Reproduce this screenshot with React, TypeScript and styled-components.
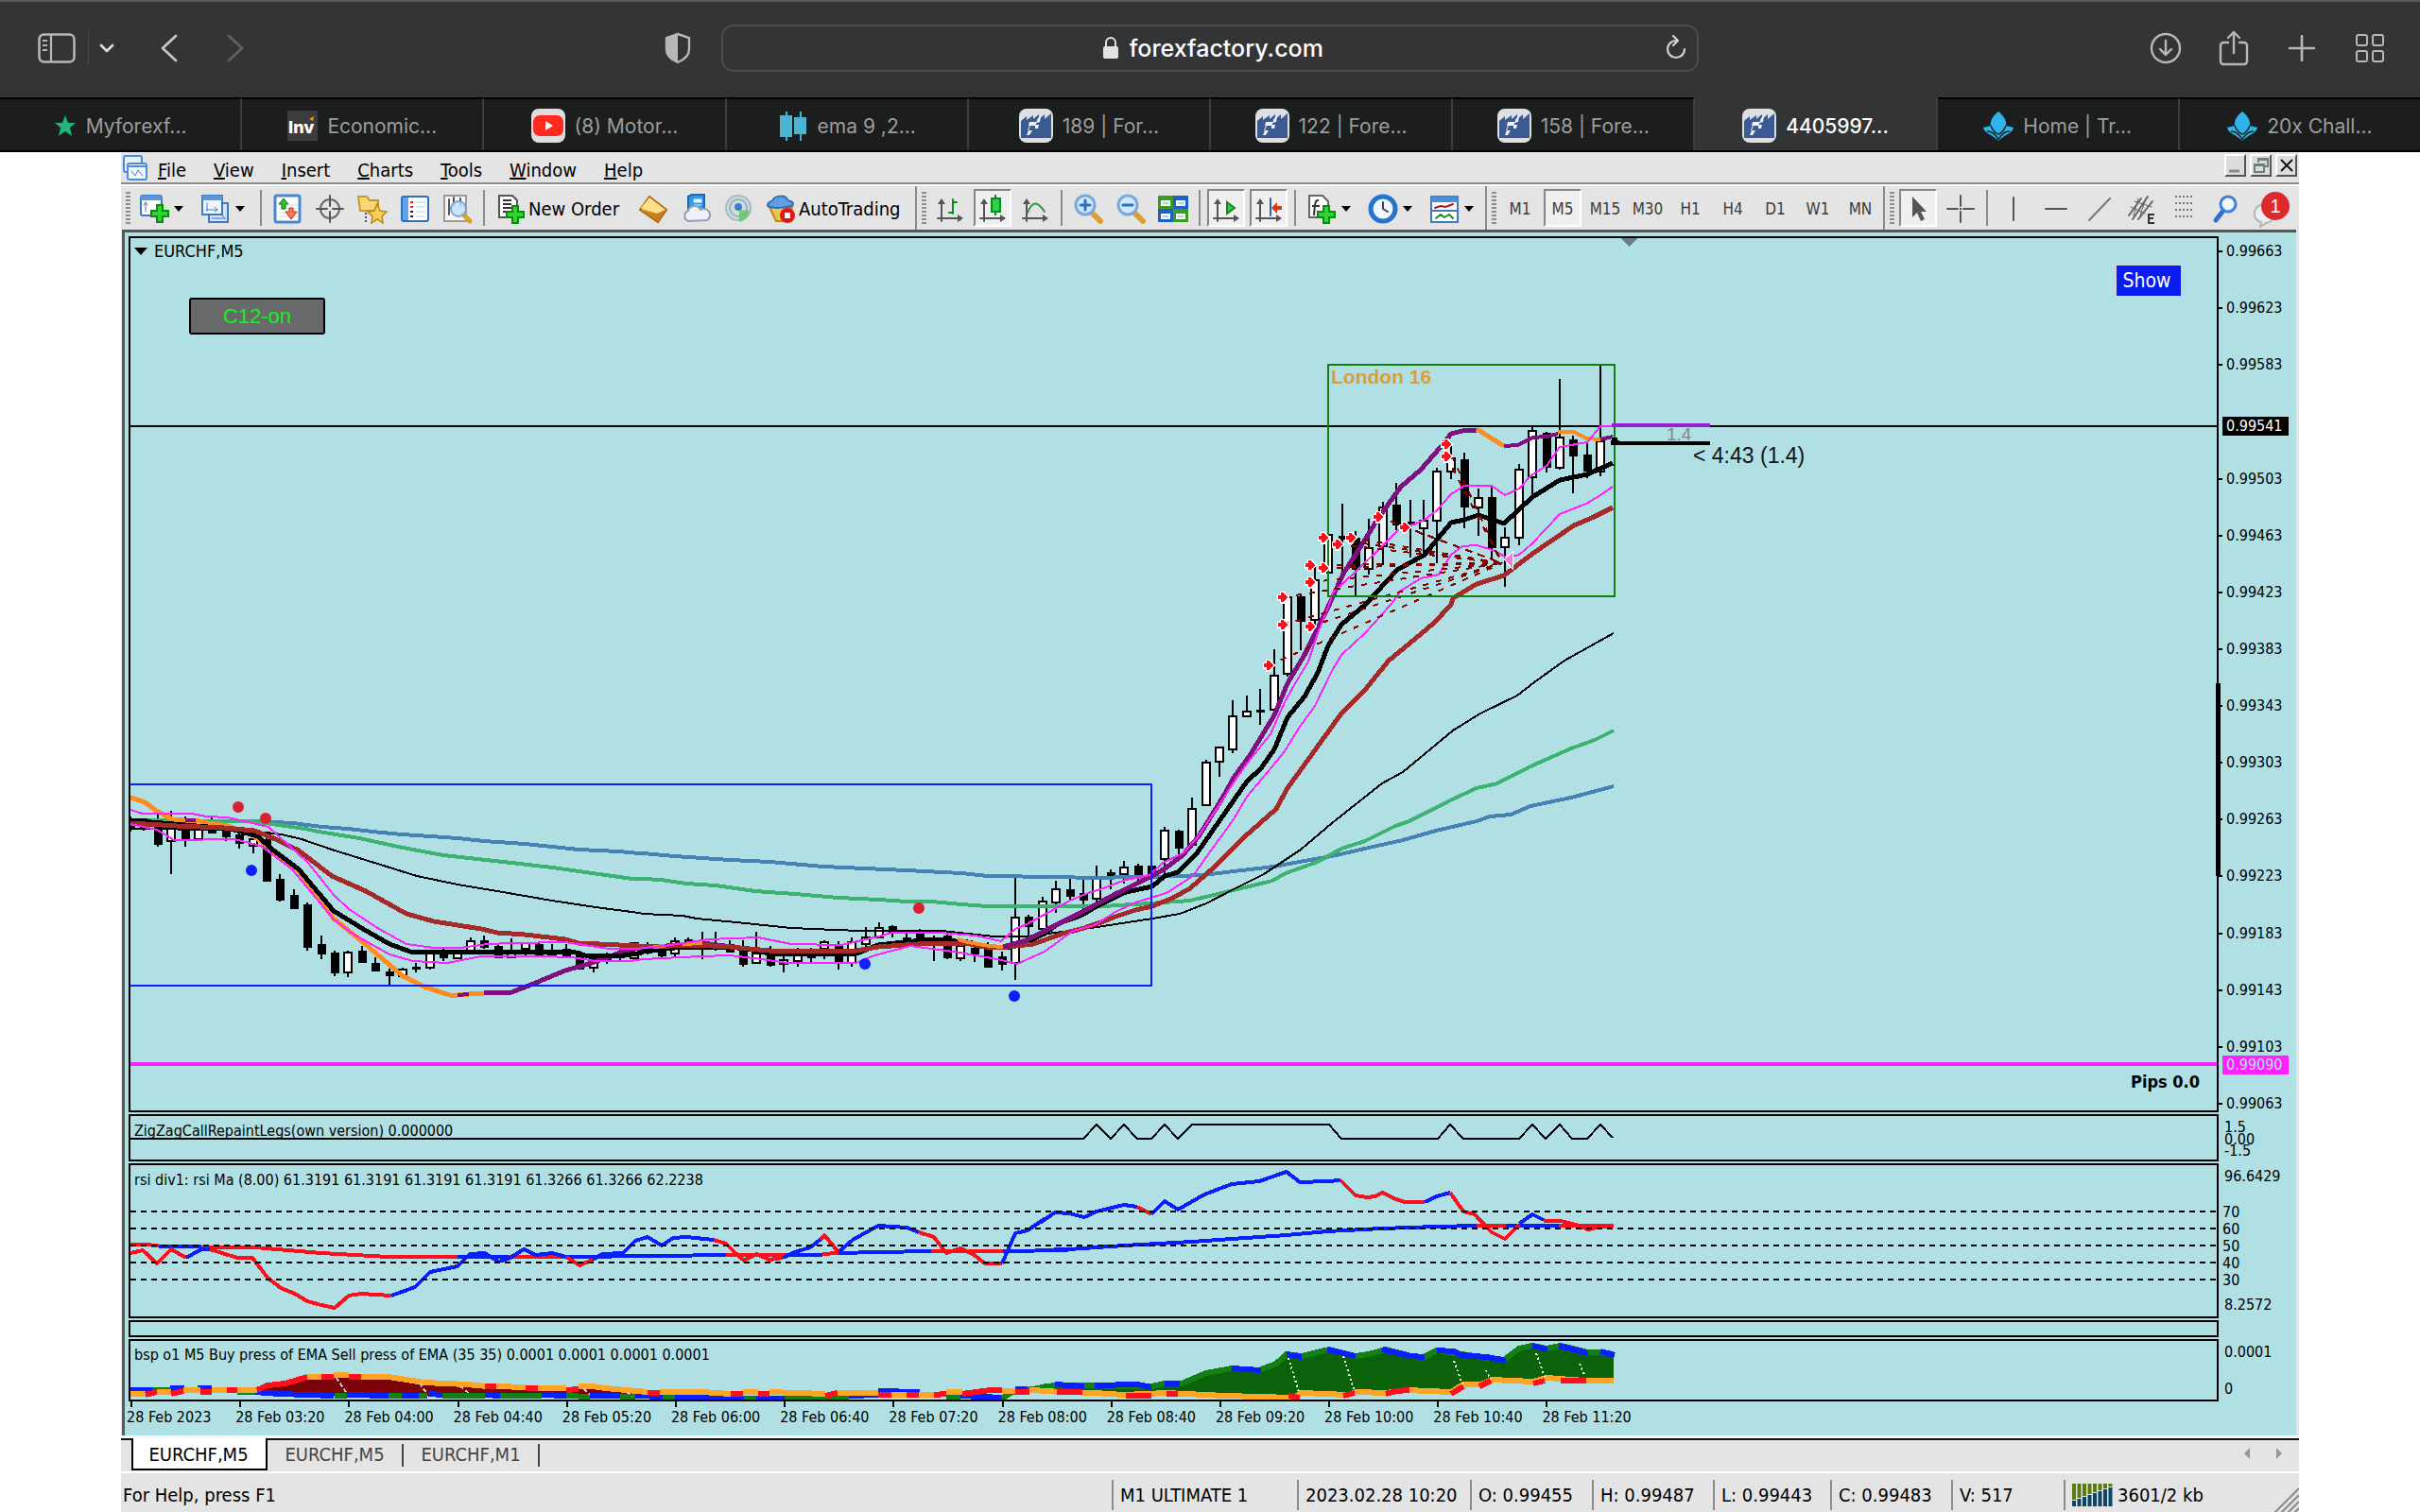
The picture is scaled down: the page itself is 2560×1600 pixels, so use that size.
import React from "react";
import styled, { createGlobalStyle } from "styled-components";

const UI = `"DejaVu Sans Condensed", "DejaVu Sans", sans-serif`;
const SYS = `Inter, "Liberation Sans", sans-serif`;

const Global = createGlobalStyle`
  html, body { margin: 0; background: #ffffff; }
  * { box-sizing: border-box; }
  button, input { font: inherit; color: inherit; }
`;

/* ---------- browser chrome ---------- */

const Page = styled.div`
  min-height: 100vh;
  display: flex;
  flex-direction: column;
  font-family: ${UI};
  font-size: 20px;
  color: #000;
`;

const BrowserBar = styled.header`
  display: grid;
  grid-template-columns: 1fr minmax(300px, 1034px) 1fr;
  align-items: center;
  height: 103px;
  padding-bottom: 3px;
  border-top: 2px solid #56585a;
  background: #333436;
  font-family: ${SYS};
`;

const BarSide = styled.div<{ $end?: boolean }>`
  display: flex;
  align-items: center;
  justify-content: ${(p) => (p.$end ? "flex-end" : "flex-start")};
  gap: ${(p) => (p.$end ? "28px" : "0")};
  padding: ${(p) => (p.$end ? "0 31px" : "0 24px 0 27px")};
`;

const GhostButton = styled.button<{ $w?: number; $push?: boolean }>`
  display: flex;
  align-items: center;
  justify-content: center;
  width: ${(p) => p.$w || 44}px;
  height: 44px;
  padding: 0;
  margin-left: ${(p) => (p.$push ? "auto" : "0")};
  border: 0;
  background: none;
  color: #b6b7b9;
`;

const BarRule = styled.span`
  width: 1px;
  height: 36px;
  margin-right: 5px;
  background: #48494b;
`;

const AddressBox = styled.div`
  display: flex;
  align-items: center;
  height: 50px;
  padding: 0 8px;
  border: 2px solid #4a4c4e;
  border-radius: 13px;
  color: #ffffff;
`;

const Address = styled.label`
  flex: 1;
  display: flex;
  align-items: center;
  justify-content: center;
  gap: 11px;
  padding-left: 36px;
`;

const AddressInput = styled.input`
  width: 208px;
  height: 36px;
  padding: 0;
  border: 0;
  background: none;
  font-size: 25px;
  font-weight: 500;
  color: #ffffff;
  outline: none;
`;

const TabStrip = styled.nav`
  display: flex;
  height: 58px;
  border-bottom: 2px solid #000;
  background: #1c1e1d;
  font-family: ${SYS};
`;

const BrowserTab = styled.button<{ $active?: boolean }>`
  flex: 1 1 0;
  min-width: 0;
  display: flex;
  align-items: center;
  justify-content: center;
  gap: 10px;
  padding: 2px 0 0;
  border: 0;
  border-right: 2px solid #3b3d3e;
  border-top: 2px solid ${(p) => (p.$active ? "#333436" : "#000")};
  background: ${(p) => (p.$active ? "#333436" : "#1c1e1d")};
  color: ${(p) => (p.$active ? "#ffffff" : "#9b9d9d")};
  font-size: 21px;
  font-weight: ${(p) => (p.$active ? 500 : 400)};
  white-space: nowrap;
  &:last-child { border-right: 0; }
`;

/* ---------- terminal window ---------- */

const Terminal = styled.main`
  flex: 1;
  display: flex;
  flex-direction: column;
  margin: 0 5%;
  background: #e4e4e4;
`;

const MenuBar = styled.div`
  display: flex;
  align-items: center;
  height: 36px;
  padding: 0 2px;
  border-bottom: 2px solid #fff;
  box-shadow: inset 0 -2px 0 #8a8a8a;
`;

const Menus = styled.div`
  display: flex;
  gap: 29px;
  margin-left: 11px;
  padding-top: 3px;
`;

const MenuItem = styled.button`
  height: 30px;
  padding: 0;
  border: 0;
  background: none;
`;

const WindowButtons = styled.div`
  display: flex;
  gap: 4px;
  margin: -6px 0 0 auto;
`;

const WindowButton = styled.button`
  display: flex;
  align-items: center;
  justify-content: center;
  width: 23px;
  height: 24px;
  padding: 0;
  border: 2px solid;
  border-color: #ffffff #555555 #555555 #ffffff;
  background: #dcdcdc;
`;

const ToolBar = styled.div`
  display: flex;
  height: 46px;
`;

const Group = styled.div<{ $w: number; $first?: boolean }>`
  display: flex;
  align-items: center;
  gap: 5px;
  flex: 0 1 ${(p) => p.$w}px;
  min-width: 0;
  padding-left: 5px;
  border-left: ${(p) => (p.$first ? "0" : "2px solid #8a8a8a")};
`;

const Grip = styled.span`
  width: 5px;
  height: 34px;
  flex: none;
  background: repeating-linear-gradient(#8c8c8c 0 2px, #e4e4e4 2px 4px);
`;

const Sep = styled.span`
  width: 2px;
  height: 38px;
  margin: 0 2px;
  flex: none;
  background: #8a8a8a;
`;

const Tool = styled.button<{ $on?: boolean; $w?: number }>`
  display: flex;
  align-items: center;
  flex: none;
  width: ${(p) => p.$w || 40}px;
  height: 40px;
  padding: 2px 0 0;
  border: 2px solid;
  border-color: ${(p) => (p.$on ? "#858585 #ffffff #ffffff #858585" : "transparent")};
  background: ${(p) => (p.$on ? "#efefef" : "transparent")};
  white-space: nowrap;
`;

const IconBox = styled.span`
  display: flex;
  align-items: center;
  justify-content: center;
  flex: none;
  width: 36px;
  height: 34px;
`;

const Caret = styled.span`
  margin-left: 3px;
  border: 5px solid transparent;
  border-top: 6px solid #000;
  border-bottom: 0;
`;

const ToolLabel = styled.span`
  margin-left: 1px;
`;

const Frame = styled.span`
  flex: 1;
  text-align: center;
  font-size: 17px;
  color: #3c3c3c;
`;

/* ---------- chart ---------- */

const ChartArea = styled.section`
  flex: none;
  margin-left: 1px;
  margin-right: 3px;
  padding: 4px 0 0 4px;
  border-top: 3px solid #555;
  border-left: 3px solid #5a5a5a;
  background: #b0e0e3;
  font-size: 16px;
`;

const Panel = styled.div`
  display: flex;
  margin-bottom: 2px;
`;

const Plot = styled.div<{ $h?: number }>`
  position: relative;
  flex: 1;
  min-width: 0;
  height: ${(p) => (p.$h ? p.$h + "px" : "auto")};
  border: 2px solid #000;
`;

const PlotSvg = styled.svg`
  display: block;
  width: 100%;
  height: auto;
`;

const Axis = styled.div`
  position: relative;
  flex: 0 0 82px;
`;

const RangeBar = styled.span`
  position: absolute;
  left: -3px;
  top: 51%;
  width: 5px;
  height: 22%;
  background: #000;
`;

const Mark = styled.span<{ $tick?: boolean; $near?: boolean }>`
  position: absolute;
  left: ${(p) => (p.$near ? "4px" : "6px")};
  line-height: 20px;
  margin-top: -9px;
  padding-left: ${(p) => (p.$tick ? "2px" : "0")};
  &::before {
    content: "";
    position: absolute;
    display: ${(p) => (p.$tick ? "block" : "none")};
    left: -6px;
    top: 9px;
    width: 4px;
    height: 2px;
    background: #000;
  }
`;

const PriceTag = styled.span<{ $pink?: boolean }>`
  position: absolute;
  left: 4px;
  width: 70px;
  margin-top: -9px;
  padding-left: 4px;
  line-height: 20px;
  background: ${(p) => (p.$pink ? "#ff22ff" : "#000")};
  color: ${(p) => (p.$pink ? "#b0e0e3" : "#fff")};
`;

const Caption = styled.div<{ $top: number; $large?: boolean }>`
  position: absolute;
  top: ${(p) => p.$top}px;
  left: 4px;
  display: flex;
  align-items: center;
  gap: 7px;
  line-height: 20px;
  font-size: ${(p) => (p.$large ? 18 : 16)}px;
  white-space: nowrap;
`;

const CaptionArrow = styled.span`
  border: 7px solid transparent;
  border-top: 8px solid #000;
  border-bottom: 0;
`;

const Overlay = styled.div`
  position: absolute;
  inset: 0;
`;

const ToggleButton = styled.button`
  position: absolute;
  left: 62px;
  top: 63px;
  width: 144px;
  height: 39px;
  border: 2px solid #000;
  border-radius: 3px;
  background: #68696b;
  color: #17f01f;
  font-family: "Liberation Sans", sans-serif;
  font-size: 22px;
  line-height: 32px;
`;

const ShowButton = styled.button`
  position: absolute;
  right: 37px;
  top: 28px;
  width: 70px;
  height: 34px;
  padding: 0 4px 0 0;
  border: 1px solid #d6d2dc;
  background: #0a1df0;
  color: #fff;
  font-size: 21px;
`;

const Pips = styled.span`
  position: absolute;
  right: 18px;
  bottom: 20px;
  font-size: 18px;
  font-weight: 700;
`;

const TimeAxis = styled.div`
  display: flex;
  height: 36px;
  margin-top: -2px;
  margin-left: -2px;
  margin-right: 84px;
`;

const TimeMark = styled.span`
  position: relative;
  flex: 0 0 5.21%;
  padding-top: 7px;
  white-space: nowrap;
  line-height: 20px;
  &::before {
    content: "";
    position: absolute;
    left: 4px;
    top: 0;
    width: 2px;
    height: 6px;
    background: #000;
  }
`;

/* ---------- bottom bars ---------- */

const ChartTabs = styled.div`
  display: flex;
  align-items: flex-start;
  height: 40px;
  border-top: 3px solid #f6f6f6;
  border-bottom: 2px solid #ffffff;
  box-shadow: inset 0 2px 0 #111;
  padding-left: 11px;
`;

const ChartTab = styled.button<{ $active?: boolean }>`
  width: 144px;
  height: ${(p) => (p.$active ? "34px" : "32px")};
  padding: 2px 2px 0 0;
  border: 0;
  color: #444;
  background: linear-gradient(#444, #444) right 6px / 2px 24px no-repeat;
  ${(p) =>
    p.$active &&
    `background: #fff; color: #000; border: 2px solid #000; border-top: 0;`}
`;

const ScrollArrows = styled.div`
  display: flex;
  gap: 14px;
  margin: 8px 11px 0 auto;
`;

const ScrollArrow = styled.button`
  width: 20px;
  height: 18px;
  padding: 0;
  border: 0;
  background: none;
  display: flex;
  align-items: center;
  justify-content: center;
`;

const StatusBar = styled.footer`
  flex: 1;
  display: flex;
  align-items: center;
  min-height: 41px;
  padding-top: 5px;
`;

const StatusCell = styled.span<{ $w?: number }>`
  display: flex;
  align-items: center;
  gap: 4px;
  flex: ${(p) => (p.$w ? `0 1 ${p.$w}px` : "1 1 0")};
  height: 32px;
  padding-left: ${(p) => (p.$w ? "7px" : "2px")};
  border-left: ${(p) => (p.$w ? "2px solid #8a8a8a" : "0")};
  white-space: nowrap;
`;

const Corner = styled.svg`
  margin: 10px 0 0 auto;
`;

/* ---------- icons ---------- */

const line = (d: string, c = "currentColor", w = 2) => (
  <path d={d} fill="none" stroke={c} strokeWidth={w} strokeLinecap="round" strokeLinejoin="round" />
);

const Plus = ({ x, y }: { x: number; y: number }) => (
  <path
    transform={`translate(${x} ${y})`}
    d="M6 0h6v6h6v6h-6v6H6v-6H0V6h6z"
    fill="#2fd52f"
    stroke="#0b8a12"
    strokeWidth="2"
  />
);

const Icon = ({ children, s = 32 }: { children: React.ReactNode; s?: number }) => (
  <svg width={s} height={s} viewBox="0 0 32 32" aria-hidden="true">
    {children}
  </svg>
);

const axes = (
  <>
    {line("M7 29V7", "#555", 2)}
    <path d="M3 11l4-6 4 6zM24 22l6 4-6 4z" fill="#555" />
    {line("M3 26H27", "#555", 2)}
  </>
);

const icons: Record<string, React.ReactNode> = {
  newchart: (
    <>
      <rect x="2" y="2" width="22" height="21" rx="2" fill="#fff" stroke="#3f7ac0" strokeWidth="2" />
      <rect x="2" y="2" width="22" height="5" fill="#5c96dc" />
      {line("M7 9v10M5 12l2-3 2 3", "#5577aa", 1)}
      <Plus x={13} y={12} />
    </>
  ),
  profiles: (
    <>
      <rect x="9" y="10" width="20" height="20" fill="#cfe3fb" stroke="#3f7ac0" strokeWidth="2" />
      <rect x="2" y="2" width="21" height="20" fill="#eef5ff" stroke="#3f7ac0" strokeWidth="2" />
      <rect x="2" y="2" width="21" height="5" fill="#5c96dc" />
      {line("M7 10v8M6 17h12M15 14l3 3-3 2M12 26h14M23 23l3 3", "#5577aa", 1)}
    </>
  ),
  market: (
    <>
      <rect x="3" y="2" width="26" height="28" rx="2" fill="#fff" stroke="#4a86d0" strokeWidth="3" />
      <path d="M7 16h20M7 20h20M7 24h20M7 12h20" stroke="#ccd8ea" />
      <path d="M12 5l5 6h-3v5h-4v-5H7z" fill="#2cc42c" stroke="#0b7a12" />
      <path d="M18 15h4v4h4l-6 8-6-8h4z" fill="#ff7a5a" stroke="#c02a10" />
    </>
  ),
  target: (
    <>
      <circle cx="16" cy="16" r="10" fill="none" stroke="#6a6a6a" strokeWidth="2" />
      {line("M16 2v11M16 19v11M2 16h11M19 16h11", "#555")}
    </>
  ),
  folder: (
    <>
      <path d="M1 3h9l3 4h9v11H3z" fill="#f8d774" stroke="#c59a2a" strokeWidth="2" />
      <path d="M21 11l3 7 7 1-5 5 1 7-6-4-6 4 1-7-5-5 7-1z" fill="#f9cf58" stroke="#b98718" strokeWidth="1.5" />
      <path d="M9 20v10" stroke="#555" strokeWidth="2" strokeDasharray="2 2" />
    </>
  ),
  navigator: (
    <>
      <rect x="2" y="3" width="28" height="26" rx="2" fill="#fff" stroke="#2f6fbe" strokeWidth="2" />
      <rect x="3" y="4" width="6" height="24" fill="#5fa4ea" />
      <path d="M11 9h3M11 14h3" stroke="#e02020" strokeWidth="2" />
      <path d="M11 19h3M11 24h3" stroke="#222" strokeWidth="2" />
      <path d="M17 9h10M17 14h10M17 19h10M17 24h10" stroke="#b7d0ee" />
    </>
  ),
  tester: (
    <>
      <rect x="2" y="2" width="23" height="27" fill="#f7f7f7" stroke="#9a9a9a" strokeWidth="2" />
      {line("M7 6v16M12 4v8M19 5v8", "#555", 2)}
      {line("M22 22l7 7", "#d8a030", 5)}
      <circle cx="17" cy="16" r="8" fill="#bfe0fb" fillOpacity=".85" stroke="#7aa6cf" strokeWidth="2" />
    </>
  ),
  order: (
    <>
      <path d="M4 2h14l5 5v18H4z" fill="#fff" stroke="#555" strokeWidth="2" />
      <path d="M8 7h9M8 11h9M8 15h9M8 19h6" stroke="#333" strokeWidth="2" />
      <Plus x={12} y={13} />
    </>
  ),
  gold: (
    <>
      <path d="M12 3l18 14-9 13L2 17z" fill="#f0b840" stroke="#a8690f" strokeWidth="2" />
      <path d="M12 4l17 13-9 4L3 15z" fill="#ffe08a" />
      <path d="M20 21l9-4-8 12-17-12z" fill="#c8811a" />
    </>
  ),
  cloud: (
    <>
      <path d="M8 3l4-2h13v16H8z" fill="#2f9af0" stroke="#1268c0" strokeWidth="2" />
      <path d="M14 6h8v3h-8zM14 12h8" fill="#e8f4ff" stroke="#e8f4ff" />
      <path d="M8 29a6 6 0 010-11 7 7 0 0113-1 6 6 0 017 11z" fill="#eef2f8" stroke="#8f9fb8" strokeWidth="2" />
    </>
  ),
  radio: (
    <>
      <circle cx="16" cy="15" r="13" fill="#d2dcdc" stroke="#a4bcba" strokeWidth="2" />
      <circle cx="16" cy="15" r="9" fill="none" stroke="#8cb4cc" strokeWidth="2" />
      <circle cx="16" cy="14" r="4" fill="#3a7fd0" />
      <path d="M17 17v13c6-2 10-6 11-12z" fill="#5cc45c" fillOpacity=".75" />
    </>
  ),
  auto: (
    <>
      <path d="M4 14h24l-7 15H11z" fill="#f4c24c" stroke="#b98718" strokeWidth="2" />
      <path d="M2 12c0-4 5-3 6-6s12-6 15 0c1 3 6 1 6 5s-27 6-27 1z" fill="#5f9fe0" stroke="#2f6fb8" strokeWidth="2" />
      <circle cx="23" cy="23" r="8" fill="#e01818" />
      <rect x="20" y="20" width="6" height="6" fill="#fff" />
    </>
  ),
  bars: (
    <>
      {axes}
      {line("M19 6v15M19 9h4M15 20h4", "#0f8a1a", 2)}
    </>
  ),
  candles: (
    <>
      {axes}
      <path d="M19 1v22" stroke="#0f8a1a" strokeWidth="2" />
      <rect x="15" y="5" width="9" height="14" fill="#2fd04a" stroke="#0f8a1a" strokeWidth="2" />
    </>
  ),
  linechart: (
    <>
      {axes}
      {line("M8 20C13 8 18 7 26 19", "#2a9a3a", 2)}
    </>
  ),
  zoomin: (
    <>
      {line("M21 21l8 8", "#d8a030", 6)}
      <circle cx="13" cy="12" r="10" fill="#cfe8fc" stroke="#7aa8dc" strokeWidth="3" />
      {line("M8 12h10M13 7v10", "#2f6fbe", 3)}
    </>
  ),
  zoomout: (
    <>
      {line("M21 21l8 8", "#d8a030", 6)}
      <circle cx="13" cy="12" r="10" fill="#cfe8fc" stroke="#7aa8dc" strokeWidth="3" />
      {line("M8 12h10", "#2f6fbe", 3)}
    </>
  ),
  tile: (
    <>
      <path d="M0 2h16v14H0zM16 16h16v14H16z" fill="#3f9a1f" />
      <path d="M16 2h16v14H16zM0 16h16v14H0z" fill="#1f5fc8" />
      <path d="M3 7h10v6H3zM19 7h10v6H19zM3 21h10v6H3zM19 21h10v6H19z" fill="#f2faff" />
      <path d="M5 10h6M21 10h6M5 24h6M21 24h6" stroke="#7aa" strokeWidth="1" />
    </>
  ),
  scroll: (
    <>
      {axes}
      <path d="M17 9l8 6-8 6z" fill="#2fd04a" stroke="#0f8a1a" strokeWidth="2" />
    </>
  ),
  shift: (
    <>
      {axes}
      {line("M18 5v18", "#2860c0", 2)}
      <path d="M19 15l6-6v4h5v4h-5v4z" fill="#d83a10" />
    </>
  ),
  indicator: (
    <>
      <path d="M3 2h14l6 6v17H3z" fill="#fff" stroke="#666" strokeWidth="2" />
      <path d="M13 7c-4-1-4 4-5 16M6 13h8" stroke="#333" strokeWidth="2" fill="none" />
      <Plus x={12} y={13} />
    </>
  ),
  clock: (
    <>
      <circle cx="16" cy="16" r="13" fill="#eef6ff" stroke="#2474cc" strokeWidth="5" />
      {line("M16 9v7l5 3", "#444", 2)}
    </>
  ),
  template: (
    <>
      <rect x="2" y="3" width="28" height="27" fill="#fff" stroke="#3f7ac0" strokeWidth="2" />
      <rect x="2" y="3" width="28" height="6" fill="#4d8fdc" />
      <path d="M2 18h28" stroke="#3f7ac0" strokeWidth="2" />
      {line("M6 15l6-2 5 1 8-3", "#b01818", 2)}
      {line("M7 26l5-4 4 3 5-3 4 4", "#1a8a2a", 2)}
    </>
  ),
  pointer: <path d="M10 3v22l5-5 4 9 4-2-4-8h6z" fill="#555" />,
  cross: (
    <>
      {line("M16 2v11M16 19v11M2 16h11M19 16h11", "#555")}
      <path d="M15 15h2v2h-2z" fill="#555" />
    </>
  ),
  vline: line("M16 4v24", "#555"),
  hline: line("M5 16h22", "#555"),
  trend: line("M6 28L28 5", "#777"),
  channel: (
    <>
      {line("M3 23L16 5M7 27L23 3M13 27L28 8", "#666", 2)}
      {line("M5 14l15 7M9 8l18 6M13 5l-5 18M21 5l-6 18", "#666", 1)}
      <path d="M30 22h-6v9h6M24 26h5" fill="none" stroke="#333" strokeWidth="2" />
    </>
  ),
  dots: (
    <path d="M7 3h18M7 10h18M7 17h18M7 24h18" stroke="#777" strokeWidth="2" strokeDasharray="2 2" />
  ),
  find: (
    <>
      {line("M12 19L5 28", "#2f6fd0", 5)}
      <circle cx="18" cy="11" r="8" fill="#eef6ff" stroke="#3f7fd8" strokeWidth="3" />
    </>
  ),
};

const BadgeSvg = styled.svg`
  flex: none;
`;

const Badge = () => (
  <BadgeSvg width="44" height="40" viewBox="0 0 44 40" aria-hidden="true">
    <path d="M3 27a11 10 0 1112 8l-6 4 1-5a10 9 0 01-7-7z" fill="#eee" stroke="#b5b5b5" strokeWidth="2" />
    <circle cx="25" cy="17" r="15" fill="#dc2a2c" />
    <text x="25" y="24" textAnchor="middle" fontSize="20" fill="#fff" fontFamily="Liberation Sans, sans-serif">
      1
    </text>
  </BadgeSvg>
);

const FactoryIcon = () => (
  <svg width="36" height="36" viewBox="0 0 36 36" aria-hidden="true">
    <rect width="36" height="36" rx="8" fill="#dedfe3" />
    <path d="M2 31V13l6-5v4l7-5v4l6-5v5l6-5v5l7-6v26z" fill="#3a5b92" />
    <path d="M11 14h8l-2 4h-6l-2 5h5l-3 5H8l2-5 2-5h-2zM20 10l3-2-1 6-4 1zM17 17h4l-1 4h-3z" fill="#eef1f7" />
  </svg>
);

const DropIcon = () => (
  <svg width="32" height="32" viewBox="0 0 32 32" aria-hidden="true">
    <path d="M16 1c5 4 9 9 8 15l8 2c-1 6-9 7-16 14C9 25 1 24 0 18l8-2C7 10 11 5 16 1z" fill="#2fb4ea" />
    <path d="M8 16c2 5 5 8 8 9 3-1 6-4 8-9M4 22c6 0 9 3 12 9M28 22c-6 0-9 3-12 9" stroke="#1c1e1d" strokeWidth="1.5" fill="none" />
  </svg>
);

const tabIcons: Record<string, React.ReactNode> = {
  star: (
    <svg width="24" height="24" viewBox="0 0 24 24" aria-hidden="true">
      <path d="M12 1l3 8h8l-6 5 2 9-7-5-7 5 2-9-6-5h8z" fill="#20b57c" />
    </svg>
  ),
  inv: (
    <svg width="32" height="32" viewBox="0 0 32 32" aria-hidden="true">
      <rect width="32" height="32" fill="#3c3c3c" />
      <text x="1" y="24" fontSize="18" fontWeight="800" fill="#fff" fontFamily="Inter, sans-serif">
        Inv
      </text>
      <path d="M23 9l5-3-1 5z" fill="#f79a1c" />
    </svg>
  ),
  tube: (
    <svg width="36" height="36" viewBox="0 0 36 36" aria-hidden="true">
      <rect width="36" height="36" rx="8" fill="#dedede" />
      <rect x="2" y="7" width="32" height="22" rx="7" fill="#ff2a20" />
      <path d="M15 13l8 5-8 5z" fill="#fff" />
    </svg>
  ),
  candle: (
    <svg width="32" height="32" viewBox="0 0 32 32" aria-hidden="true">
      <path d="M2 5h13v23H2zM17 7h13v18H17z" fill="#4db3d0" />
      <path d="M9 1v31M24 1v31" stroke="#4db3d0" strokeWidth="2" />
    </svg>
  ),
  factory: <FactoryIcon />,
  drop: <DropIcon />,
};

/* ---------- chart data ---------- */

/* A tile is a part of the plot whose readings are stored on their own grid:
   1568 steps across the tile's width and 3 steps to a unit downwards. */
type Tile = { x: number; y: number; w: number };
const A: Tile = { x: 130, y: 800, w: 560 };
const B: Tile = { x: 680, y: 800, w: 600 };
const C: Tile = { x: 1180, y: 640, w: 560 };
const D: Tile = { x: 1280, y: 360, w: 660 };
const E: Tile = { x: 1100, y: 1160, w: 700 };
const F: Tile = { x: 130, y: 1160, w: 1000 };

const at = (t: Tile, x: number, y: number): [number, number] => [
  Math.round(t.x + (x * t.w) / 1568),
  Math.round(t.y + y / 3),
];

const pts = (...parts: [Tile, string][]) =>
  parts
    .flatMap(([t, s]) => s.split(" ").map((p) => p.split(",").map(Number)).map(([x, y]) => at(t, x, y).join(",")))
    .join(" ");

const Line = ({ c, w, p }: { c: string; w: number; p: [Tile, string][] }) => (
  <polyline points={pts(...p)} fill="none" stroke={c} strokeWidth={w} strokeLinejoin="round" />
);

const BAR0 = 138;
const STEP = 14.4;

/* high, body top, body bottom, low; "w" marks a rising bar */
const candleRows: [number, number, string][] = [
  [0, 800,
    "192 200 230 240 b|205 225 232 238 b|185 225 278 288 b|175 232 270 375 w|192 228 268 288 b|215 232 265 270 w|195 230 243 245 b|212 230 256 270 b|240 250 276 293 b|245 264 286 308 w|262 264 395 395 b|375 391 456 462 b|424 441 482 482 b|466 472 606 617 b|570 597 627 644 b|618 624 687 698 b|618 624 687 703 w|602 618 655 655 b|640 656 682 682 b|676 683 697 725 b|672 679 700 705 w|656 668 675 686 b|618 627 671 677 w|612 622 639 650 b|618 625 642 642 w|576 587 617 620 w|570 586 606 612 b|596 602 638 640 b|580 620 640 642 w|590 595 612 635 w|590 597 635 637 b|598 618 632 635 w|597 612 634 636 b|618 624 675 678 b|640 645 673 686 w|625 632 650 660 b|615 622 640 650 b|592 595 642 642 w|592 597 625 630 b|605 612 632 638 b|576 587 627 640 w|576 581 605 610 b|558 592 606 645 b|558 600 606 618 b|585 598 620 625 b|585 608 660 670 b|558 628 658 660 w|602 612 664 670 b|630 647 659 686 w|608 622 652 670 w|610 622 640 657 b|586 592 612 645 w|587 598 655 677 b|576 592 658 670 w|543 577 598 608 w|527 545 576 580 w|537 539 558 575 b|562 575 590 600 b|549 560 588 595 b|570 585 600 650 b|560 570 638 644 b|595 602 643 650 w|600 608 627 655 b|590 612 670 670 b|622 635 659 682 b|385 512 658 710 w|505 510 540 570 b|446 463 550 556 w|397 424 465 498 w|390 424 443 455 b|390 435 455 488 b|348 390 454 465 w|360 370 382 422 b|333 355 374 405 w|343 349 374 400 b|345 349 380 380 b|226 237 328 380 w|235 236 292 315 b|133 167 283 290 w|13 21 156 158 w"],
  [80, 640, "450 452 497 545 w|304 355 458 470 w|288 339 355 357 w|266 332 340 380 b|142 226 334 340 w"],
  [85, 360,
    "815 817 1060 1068 w|808 812 890 985 b|720 763 888 955 w|615 619 737 740 w|518 622 630 735 b|605 626 726 810 b|567 660 727 745 w|513 530 653 713 w|453 523 586 603 b|507 577 585 690 b|507 572 598 685 w|405 418 574 707 w|330 375 418 440 w|357 378 527 598 b|470 500 531 620 w|465 497 656 700 b|595 628 656 783 w|394 412 628 650 w|273 289 435 498 w|290 293 403 420 b|124 310 406 410 w|302 314 365 486 b|320 363 413 437 b|78 320 418 431 w|310 318 330 333 b"],
];

const candles = candleRows.flatMap(([first, y0, rows]) =>
  rows.split("|").map((r, k) => {
    const f = r.split(" ");
    const [hi, top, bot, lo] = f.slice(0, 4).map((n) => Math.round(y0 + Number(n) / 3));
    return { x: Math.round(BAR0 + (first + k) * STEP), hi, top, bot, lo, up: f[4] === "w" };
  })
);

const arrows: [number, number][] = [
  [148, 1032], [182, 817], [182, 903], [252, 713], [252, 768], [252, 908], [286, 628],
  [286, 724], [320, 648], [354, 627], [424, 562], [490, 595], [593, 329], [593, 368],
];

const ORANGE = "#ff8c1e";
const PURPLE = "#7f107f";
const MAGENTA = "#ff22ff";
const BLUE = "#0a1eff";
const RED = "#ff0f1e";

const PriceDrawing = () => (
  <PlotSvg viewBox="138 252 2207 923" shapeRendering="crispEdges" role="img" aria-label="EURCHF price chart">
    <path d="M138 451H2345" stroke="#000" strokeWidth="2" />
    <path d="M138 1126H2345" stroke={MAGENTA} strokeWidth="4" />
    <path d="M1714 252h18l-9 9z" fill="#6d7f86" />
    {candles.map((c, i) => (
      <g key={i}>
        <path d={`M${c.x} ${c.hi}V${c.lo}`} stroke="#000" strokeWidth="2" />
        <rect
          x={c.x - 4}
          y={c.top}
          width="8"
          height={Math.max(2, c.bot - c.top)}
          fill={c.up ? "#fff" : "#000"}
          stroke="#000"
          strokeWidth={c.up ? 2 : 1}
        />
      </g>
    ))}
    <Line c="#4682b4" w={4} p={[
      [A, "385,207 505,213 545,218 590,226 665,230 740,241 825,248 870,252 990,262 1070,270 1190,278 1270,288 1350,296 1470,302 1530,308"],
      [B, "0,310 90,319 240,329 350,337 500,351 615,356 730,362 880,373 955,380 1140,383 1250,386 1300,386"],
      [C, "0,865 100,863 260,858 350,847 470,832 560,814 640,797 750,770 850,748 950,718 1070,687 1110,673 1170,667 1230,640 1350,612 1475,577"]]} />
    <Line c="#3cb371" w={4} p={[
      [A, "22,205 380,208 540,230 580,240 700,262 830,290 950,315 1150,338 1270,355 1430,378 1510,390"],
      [B, "0,391 50,393 120,406 200,410 310,428 420,437 540,450 650,455 730,461 800,462 880,470 955,477 1280,478"],
      [C, "0,954 60,950 220,940 350,905 465,875 505,853 600,815 670,775 740,750 830,703 870,686 990,622 1070,583 1130,567 1230,512 1350,455 1420,430 1475,398"]]} />
    <Line c="#000" w={2} p={[
      [A, "22,230 300,234 400,240 470,248 530,265 620,297 780,350 870,380 990,408 1110,430 1270,458 1400,480 1530,497"],
      [B, "0,501 110,508 150,517 260,527 335,537 410,545 530,553 600,556 825,556 900,565 970,573 1060,572 1140,562 1240,546"],
      [C, "0,1015 110,997 190,980 270,947 350,903 440,855 550,777 640,692 790,567 850,532 1000,400 1080,345 1190,287 1240,247 1330,178 1475,90"]]} />
    <Line c={ORANGE} w={5} p={[[A, "22,133 50,140 70,150 95,172 145,200 180,203 215,205 250,213 310,222 380,250 420,280 520,365 625,515 710,590 830,700 900,735 970,758 990,758 1025,757 1070,753"]]} />
    <Line c={PURPLE} w={4} p={[[A, "185,203 215,203"]]} />
    <Line c={PURPLE} w={4} p={[[A, "990,758 1025,757"]]} />
    <Line c={PURPLE} w={5} p={[[A, "1070,753 1150,750 1210,727 1310,680 1390,657 1480,622 1530,608"], [B, "0,612 90,600 165,594 330,618"]]} />
    <Line c="#000" w={5} p={[
      [A, "22,203 60,203 85,210 150,215 320,232 400,255 440,295 520,360 625,492 710,548 790,597 850,622 990,622 1270,620 1340,625 1370,634 1480,634 1530,626"],
      [B, "0,620 110,607 240,606 300,615 350,627 590,626 650,600 720,590 800,583 900,590 960,607 1020,605 1060,590 1110,565 1150,530 1210,507 1260,475"],
      [C, "0,927 30,912 110,893 145,860 185,850 240,790 350,620 390,560 430,520 470,460 510,357 560,290 600,215 630,130 670,62 740,0"],
      [D, "470,730 540,680 605,580 640,570 674,555 740,583 811,498 879,443 947,425 1012,390"]]} />
    <Line c="#a52a2a" w={5} p={[
      [A, "22,212 160,222 300,228 390,238 440,258 520,300 620,380 720,430 840,500 920,525 1060,548 1110,562 1190,567 1310,583 1350,593 1470,600 1530,602"],
      [B, "0,605 150,601 240,607 350,617 590,618 650,606 760,597 890,595 960,610 1010,607 1080,598 1160,565 1220,547 1280,522"],
      [C, "0,990 60,970 110,958 170,930 220,900 290,835 380,738 475,648 510,583 670,345 740,270 810,178 870,122 940,60 995,0"],
      [D, "610,818 670,775 740,747 810,678 870,628 915,587 960,565 1012,530"]]} />
    <Line c={ORANGE} w={4} p={[[B, "30,606 60,604"]]} />
    <Line c={ORANGE} w={4} p={[[B, "110,598 165,593"]]} />
    <Line c={ORANGE} w={4} p={[[B, "870,583 900,590 960,604 995,606"]]} />
    <Line c={PURPLE} w={5} p={[
      [B, "995,605 1060,585 1110,555 1210,497"],
      [C, "0,917 110,862 150,835 200,795 245,735 320,610 350,550 400,475 470,350 510,250 560,160 600,75 632,0"],
      [D, "335,740 366,680 420,570 450,520 480,465 530,410 580,340 605,297 635,287 670,284"]]} />
    <Line c={ORANGE} w={5} p={[[D, "670,282 740,335"]]} />
    <Line c={PURPLE} w={4} p={[[D, "740,335 775,333 811,308 845,305 875,298"]]} />
    <Line c={ORANGE} w={4} p={[[D, "875,291 913,292 947,313 981,314"]]} />
    <Line c={PURPLE} w={4} p={[[D, "981,314 1012,305"]]} />
    <Line c={MAGENTA} w={2} p={[
      [A, "22,172 60,183 205,184 245,193 310,195 430,225 550,340 625,440 670,485 760,548 840,597 920,608 1000,608 1080,597 1150,593 1310,590 1440,612 1530,611"],
      [B, "0,610 60,602 180,582 320,577 410,598 550,600 650,572 690,562 820,560 920,570 990,587 1030,548 1060,533 1180,460 1230,435 1280,418"],
      [C, "0,885 30,872 100,858 140,820 200,790 240,740 310,630 360,545 400,490 460,410 500,310 530,255 570,180 600,90 632,0"],
      [D, "310,800 366,735 434,650 470,605 540,570 570,540 605,490 640,462 708,462 742,492 777,470 811,425 845,400 879,340 947,325 981,273 1012,273"]]} />
    <Line c={MAGENTA} w={2} p={[
      [A, "22,215 100,235 150,266 330,265 410,285 500,360 625,520 680,565 790,630 860,650 960,657 1060,635 1240,636 1330,640 1400,652 1500,652"],
      [B, "0,645 160,635 240,632 330,645 400,657 590,658 640,632 740,604 860,622 980,645 1035,660 1110,622 1190,555 1250,537"],
      [C, "0,975 60,945 150,915 230,860 270,800 350,680 390,610 450,530 500,465 540,395 590,320 640,210 670,160 740,90 815,0"],
      [D, "480,795 530,757 575,745 605,680 635,655 670,652 710,665 745,690 777,680 810,645 879,553 945,520 981,493 1012,465"]]} />
    {arrows.map(([x, y], i) => {
      const [x1, y1] = at(D, x, y);
      const [x2, y2] = at(D, 735, 708);
      return <path key={i} d={`M${x1} ${y1}L${x2} ${y2}`} stroke="#800000" strokeWidth="2" strokeDasharray="6 8" />;
    })}
    <path d="M138 830H1218V1043H138" fill="none" stroke={BLUE} strokeWidth="2" />
    <rect x="1405" y="386" width="303" height="245" fill="none" stroke="#108010" strokeWidth="2" />
    <path d="M1705 450H1809" stroke="#9a1ed6" strokeWidth="4" />
    <path d="M1705 469H1809M1705 465h6" stroke="#000" strokeWidth="4" />
    {arrows.map(([x, y], i) => {
      const [cx, cy] = at(D, x, y);
      return (
        <path
          key={i}
          transform={`translate(${cx} ${cy})`}
          d="M-5-2H-2V-5H1L5 0 1 5H-2V2H-5z"
          fill="#ff0f1e"
          stroke="#fff"
          strokeWidth="3"
          paintOrder="stroke"
        />
      );
    })}
    <path d="M1600 584v18l-9-10z" fill="#ee82d8" stroke="#fff" strokeWidth="1" />
    <g shapeRendering="auto">
      {[[252, 854], [281, 866], [972, 961]].map(([x, y]) => (
        <circle key={x} cx={x} cy={y} r="6" fill="#dc2032" />
      ))}
      {[[266, 921], [915, 1020], [1073, 1054]].map(([x, y]) => (
        <circle key={x} cx={x} cy={y} r="6" fill={BLUE} />
      ))}
    </g>
    <g fontFamily="Liberation Sans, sans-serif">
      <text x="1408" y="406" fontSize="21" fontWeight="700" fill="#daa036">London 16</text>
      <text x="1763" y="466" fontSize="19" fill="#808a8c">1.4</text>
      <text x="1791" y="490" fontSize="23" fill="#111">{"< 4:43 (1.4)"}</text>
    </g>
  </PlotSvg>
);

const ZigZagDrawing = () => (
  <PlotSvg viewBox="138 1181 2207 46" shapeRendering="crispEdges" role="img" aria-label="ZigZag legs">
    <polyline
      points={"138,1205 " + pts([E, "104,134 134,91 167,134 199,91 231,134 265,134 295,91 328,134 360,91 685,91 715,134 942,134 973,91 1004,134 1136,134 1167,91 1199,134 1231,91 1262,134 1297,134 1328,91 1358,131"])}
      fill="none"
      stroke="#000"
      strokeWidth="2"
    />
  </PlotSvg>
);

const rsiSegments: [string, Tile, string][] = [
  [RED, F, "12,470 35,472 60,474"],
  [BLUE, F, "60,476 130,478"],
  [RED, F, "130,480 220,480 330,497 440,510 555,511"],
  [BLUE, F, "555,511 640,510"],
  [RED, F, "640,510 735,510"],
  [BLUE, F, "735,510 890,508 1000,503"],
  [RED, F, "1000,503 1100,503"],
  [BLUE, F, "1100,503 1160,503"],
  [RED, F, "1160,500 1187,498"],
  [BLUE, F, "1187,497 1253,495 1340,492"],
  [RED, F, "1340,493 1460,493"],
  [BLUE, F, "1460,493 1568,488"],
  [BLUE, E, "0,490 70,487 200,473 360,462 455,453 585,440 680,430 810,420 940,413 1035,412"],
  [RED, E, "1035,412 1105,412"],
  [BLUE, E, "1105,412 1230,412"],
  [RED, E, "1230,412 1360,412"],
  [RED, F, "12,497 33,490 56,532 80,485 105,512"],
  [BLUE, F, "105,512 130,487 145,487"],
  [RED, F, "145,487 165,497 190,513 215,513 240,575 262,608 285,628 305,652 330,664 352,672 375,632 395,627 445,633"],
  [BLUE, F, "445,633 485,605 510,558 555,540 575,500 600,498 622,525 640,517 665,487 685,503 712,497 735,510"],
  [RED, F, "735,510 758,538 780,520"],
  [BLUE, F, "780,520 795,500 830,498 850,460 870,447 893,475 912,450 935,448 980,456"],
  [RED, F, "980,456 1000,467 1015,495 1030,522 1050,502 1073,520 1095,513"],
  [BLUE, F, "1095,513 1115,495 1140,480 1160,450"],
  [RED, F, "1157,455 1163,440 1187,495"],
  [BLUE, F, "1187,495 1210,455 1253,410 1300,418 1320,433"],
  [RED, F, "1320,433 1345,448 1365,497 1390,483 1410,500 1430,530 1458,532"],
  [BLUE, F, "1458,532 1480,435 1500,427 1530,387"],
  [BLUE, E, "0,402 35,368 70,372 105,385 135,365 199,345 230,352"],
  [RED, E, "230,352 265,376"],
  [BLUE, E, "265,376 295,333 328,360 390,313 455,278 520,270 585,241 615,272 680,270 713,266"],
  [RED, E, "713,266 748,314 775,322 795,318 810,306 845,328 865,337 912,337"],
  [BLUE, E, "912,337 940,318 973,307"],
  [RED, E, "973,307 1004,366 1030,375 1070,433 1102,452 1136,407"],
  [BLUE, E, "1136,405 1167,374 1195,392"],
  [RED, E, "1195,397 1235,395 1270,407 1300,423 1330,413 1360,412"],
];

const RsiDrawing = () => (
  <PlotSvg viewBox="138 1233 2207 160" shapeRendering="crispEdges" role="img" aria-label="RSI indicator">
    {rsiSegments.map(([c, t, p], i) => (
      <Line key={i} c={c} w={4} p={[[t, p]]} />
    ))}
    <path
      d="M138 1282H2345M138 1300H2345M138 1318H2345M138 1336H2345M138 1354H2345"
      stroke="#000"
      strokeWidth="2"
      strokeDasharray="6 5"
    />
  </PlotSvg>
);

const sellTop = "225,930 260,915 305,890 362,884 440,890 500,905 600,922 700,927 735,930 770,922 850,936 900,942";
const buyTop = "0,924 35,918 265,922 295,912 335,912 395,878 455,864 520,870 560,850 585,820 620,826 685,803 748,825 780,820 820,803 880,825 910,827 940,808 1000,820 1100,838 1136,800 1167,793 1200,800 1235,793 1300,812 1330,812 1360,820";
const buyLow = "0,937 130,942 200,948 300,943 440,950 600,958 620,943 730,948 750,938 820,943 870,934 975,940 1004,915 1045,915 1070,900 1170,907 1200,895 1290,902 1360,902";
const buyLowBack = buyLow.split(" ").reverse().join(" ");

const AMBER = "#ffa526";
const GREEN = "#128012";

const bspSegments: [string, Tile, string][] = [
  [BLUE, F, "12,932 50,932"], [GREEN, F, "50,934 80,932"], [BLUE, F, "78,926 102,926"], [BLUE, F, "124,926 148,926"],
  [GREEN, F, "190,940 220,940"], [BLUE, F, "220,938 260,944 350,950"], [GREEN, F, "352,952 372,950"],
  [BLUE, F, "372,948 445,950"], [GREEN, F, "440,950 462,950"], [BLUE, F, "462,952 490,950"], [GREEN, F, "490,952 505,950"],
  [BLUE, F, "507,946 530,948"], [GREEN, F, "530,950 600,952"], [BLUE, F, "600,948 625,950"], [GREEN, F, "625,950 695,952"],
  [BLUE, F, "695,948 735,950"], [GREEN, F, "735,952 775,955"], [BLUE, F, "775,950 825,952"], [GREEN, F, "825,955 850,955"],
  [BLUE, F, "850,952 895,954"], [GREEN, F, "895,958 915,956"], [BLUE, F, "915,956 1030,960"], [GREEN, F, "1030,960 1050,960"],
  [BLUE, F, "1050,960 1098,960"], [GREEN, F, "1098,958 1205,955"], [BLUE, F, "1205,952 1255,948"], [BLUE, F, "1253,937 1322,940"],
  [GREEN, F, "1365,958 1390,956"], [BLUE, F, "1390,952 1460,958"], [GREEN, F, "1458,960 1475,940 1540,920"], [BLUE, F, "1480,930 1500,930"],
  [AMBER, F, "12,944 38,944"], [RED, F, "38,948 56,940"], [AMBER, F, "56,940 80,940"], [RED, F, "80,945 100,936"], [AMBER, F, "100,934 128,934"],
  [RED, F, "128,938 148,938"], [AMBER, F, "148,934 175,934"], [RED, F, "172,934 192,934"], [AMBER, F, "190,934 222,934"],
  [RED, F, "222,932 240,918 270,912 305,892"], [AMBER, F, "305,890 330,890"], [RED, F, "330,890 350,890"], [AMBER, F, "350,884 375,884"],
  [RED, F, "375,890 395,890"], [AMBER, F, "395,890 440,890 500,908 570,914 605,922"], [RED, F, "600,922 620,922"], [AMBER, F, "620,922 668,924"],
  [RED, F, "668,928 688,928"], [AMBER, F, "688,928 735,928"], [RED, F, "735,934 755,930"], [AMBER, F, "755,922 780,922 800,928 870,938"],
  [RED, F, "870,942 890,942"], [AMBER, F, "890,938 960,938 1008,944"], [RED, F, "1008,944 1028,944"], [AMBER, F, "1028,938 1053,938"],
  [RED, F, "1053,944 1073,944"], [AMBER, F, "1073,938 1165,944"], [RED, F, "1165,950 1185,942"], [AMBER, F, "1185,942 1253,942"],
  [RED, F, "1253,948 1275,948"], [AMBER, F, "1275,948 1300,948"], [RED, F, "1300,948 1320,948"], [AMBER, F, "1320,948 1350,948"],
  [RED, F, "1346,948 1366,944"], [AMBER, F, "1366,938 1392,938"], [RED, F, "1392,944 1440,934 1458,934"], [AMBER, F, "1458,936 1480,936"],
  [RED, F, "1480,938 1503,938"], [AMBER, F, "1503,934 1545,936"],
  [GREEN, E, buyTop], [AMBER, E, buyLow],
  [BLUE, E, "35,916 105,922"], [BLUE, E, "130,918 230,916 265,924"], [BLUE, E, "295,912 332,912"], [BLUE, E, "455,864 525,870"],
  [BLUE, E, "585,820 620,828"], [BLUE, E, "680,803 748,825"], [BLUE, E, "810,803 880,825 912,829"], [BLUE, E, "940,808 980,810 1000,822 1060,828 1105,840"],
  [BLUE, E, "1167,793 1202,803"], [BLUE, E, "1230,793 1300,815"], [BLUE, E, "1328,810 1362,822"],
  [RED, E, "40,938 100,938"], [RED, E, "204,950 264,950"], [RED, E, "300,944 328,944"], [RED, E, "590,952 615,956"], [RED, E, "720,950 745,942"],
  [RED, E, "820,944 845,936 875,934"], [RED, E, "975,945 1004,922"], [RED, E, "1042,922 1068,904"], [RED, E, "1170,912 1197,902"], [RED, E, "1235,902 1295,902"],
];

const dotted: string[] = [
  "590,830 613,940", "718,825 745,940", "980,840 1002,915", "1058,870 1068,900", "1175,815 1197,890", "1280,850 1293,890",
];

const BspDrawing = () => (
  <PlotSvg viewBox="138 1419 2207 62" shapeRendering="crispEdges" role="img" aria-label="Buy and sell pressure">
    <polygon points={pts([F, sellTop + " 900,950 600,950 350,950 225,938"])} fill="#7c0408" />
    <polygon points={pts([E, buyTop + " " + buyLowBack])} fill="#0b620b" />
    {bspSegments.map(([c, t, p], i) => (
      <Line key={i} c={c} w={6} p={[[t, p]]} />
    ))}
    {dotted.map((p) => (
      <polyline key={p} points={pts([E, p])} stroke="#e8f4e8" strokeWidth="2" strokeDasharray="2 3" />
    ))}
    {["355,895 372,945", "492,912 505,945", "560,920 575,945", "765,930 775,948", "835,940 845,950"].map((p) => (
      <polyline key={p} points={pts([F, p])} stroke="#dfc8c8" strokeWidth="2" strokeDasharray="4 3" />
    ))}
  </PlotSvg>
);

const prices = Array.from({ length: 16 }, (_, i) => (0.99663 - i * 0.0004).toFixed(5)).filter((p) => p !== "0.99543");
const priceY = (p: string) => ((0.99663 - Number(p)) / 0.006) * 97.3 + 1.62;

const times = ["28 Feb 2023", "03:20", "04:00", "04:40", "05:20", "06:00", "06:40", "07:20", "08:00", "08:40", "09:20", "10:00", "10:40", "11:20"].map(
  (t) => (t.length > 5 ? t : "28 Feb " + t)
);

const tabs: [string, string, boolean?][] = [
  ["star", "Myforexf..."], ["inv", "Economic..."], ["tube", "(8) Motor..."], ["candle", "ema 9 ,2..."], ["factory", "189 | For..."],
  ["factory", "122 | Fore..."], ["factory", "158 | Fore..."], ["factory", "4405997...", true], ["drop", "Home | Tr..."], ["drop", "20x Chall..."],
];

const menus = ["File", "View", "Insert", "Charts", "Tools", "Window", "Help"];
const frames = ["M1", "M5", "M15", "M30", "H1", "H4", "D1", "W1", "MN"];
const status: [string, number][] = [
  ["M1 ULTIMATE 1", 196], ["2023.02.28 10:20", 183], ["O: 0.99455", 129], ["H: 0.99487", 128], ["L: 0.99443", 124], ["C: 0.99483", 128], ["V: 517", 119],
];

const ToolIcon = ({ name, on }: { name: string; on?: boolean }) => (
  <Tool $on={on} aria-label={name} aria-pressed={on}>
    <IconBox><Icon>{icons[name]}</Icon></IconBox>
  </Tool>
);

const DropTool = ({ name }: { name: string }) => (
  <Tool $w={60} aria-label={name}>
    <IconBox><Icon>{icons[name]}</Icon></IconBox>
    <Caret />
  </Tool>
);

const NetworkBars = () => (
  <svg width="44" height="26" viewBox="0 0 44 26" aria-hidden="true">
    {Array.from({ length: 8 }, (_, i) => (
      <g key={i}>
        <rect x={i * 5.5} y="1" width="4" height={17 - i * 2} fill="#5a7a12" />
        <rect x={i * 5.5} y={19 - i * 2} width="4" height={6 + i * 2} fill="#0d4468" />
      </g>
    ))}
  </svg>
);

export default function App() {
  return (
    <Page>
      <Global />
      <BrowserBar>
        <BarSide>
          <GhostButton $w={66} aria-label="Sidebar">
            <svg width="40" height="32" viewBox="0 0 40 32">
              <rect x="1.5" y="1.5" width="37" height="29" rx="5" fill="none" stroke="currentColor" strokeWidth="2.5" />
              <path d="M14 2v28M5 8h5M5 13h5M5 18h5" stroke="currentColor" strokeWidth="2.2" />
            </svg>
          </GhostButton>
          <BarRule />
          <GhostButton $w={28} aria-label="Tab groups">
            <svg width="16" height="10" viewBox="0 0 16 10">{line("M2 2l6 6 6-6", "#d8d9da", 2.8)}</svg>
          </GhostButton>
          <GhostButton $w={104} aria-label="Back">
            <svg width="20" height="30" viewBox="0 0 20 30">{line("M17 2L3 15l14 13", "#c4c5c7", 2.8)}</svg>
          </GhostButton>
          <GhostButton $w={36} aria-label="Forward">
            <svg width="20" height="30" viewBox="0 0 20 30">{line("M3 2l14 13L3 28", "#5f6163", 2.8)}</svg>
          </GhostButton>
          <GhostButton $push aria-label="Privacy report">
            <svg width="30" height="34" viewBox="0 0 30 34">
              <path d="M15 2l12 4v12c0 7-5 11-12 14C8 29 3 25 3 18V6z" fill="none" stroke="currentColor" strokeWidth="2.4" />
              <path d="M15 2v30C8 29 3 25 3 18V6z" fill="currentColor" />
            </svg>
          </GhostButton>
        </BarSide>
        <AddressBox>
          <Address>
            <svg width="18" height="24" viewBox="0 0 18 24" aria-hidden="true">
              <rect x="1" y="10" width="16" height="13" rx="2" fill="#e2e2e3" />
              <path d="M4 10V6a5 5 0 0110 0v4" fill="none" stroke="#e2e2e3" strokeWidth="2" />
            </svg>
            <AddressInput aria-label="Address" defaultValue="forexfactory.com" />
          </Address>
          <GhostButton $w={28} aria-label="Reload">
            <svg width="24" height="28" viewBox="0 0 24 28">
              {line("M12 6a9 9 0 109 9M9 1l5 5-5 5", "#d0d1d2", 2.2)}
            </svg>
          </GhostButton>
        </AddressBox>
        <BarSide $end>
          <GhostButton aria-label="Downloads">
            <svg width="34" height="34" viewBox="0 0 34 34">
              <circle cx="17" cy="17" r="15" fill="none" stroke="currentColor" strokeWidth="2.4" />
              {line("M17 9v15M11 18l6 6 6-6", "currentColor", 2.4)}
            </svg>
          </GhostButton>
          <GhostButton aria-label="Share">
            <svg width="32" height="38" viewBox="0 0 32 38">
              {line("M10 13H5a3 3 0 00-3 3v17a3 3 0 003 3h22a3 3 0 003-3V16a3 3 0 00-3-3h-5M16 24V2M10 8l6-6 6 6", "currentColor", 2.4)}
            </svg>
          </GhostButton>
          <GhostButton aria-label="New tab">
            <svg width="28" height="28" viewBox="0 0 28 28">{line("M14 1v26M1 14h26", "currentColor", 2.6)}</svg>
          </GhostButton>
          <GhostButton aria-label="Tab overview">
            <svg width="32" height="32" viewBox="0 0 32 32" fill="none" stroke="currentColor" strokeWidth="2">
              <rect x="2" y="2" width="11" height="11" rx="2" />
              <rect x="19" y="2" width="11" height="11" rx="2" />
              <rect x="2" y="19" width="11" height="11" rx="2" />
              <rect x="19" y="19" width="11" height="11" rx="2" />
            </svg>
          </GhostButton>
        </BarSide>
      </BrowserBar>

      <TabStrip>
        {tabs.map(([icon, label, active]) => (
          <BrowserTab key={label} $active={active}>
            {tabIcons[icon]}
            {label}
          </BrowserTab>
        ))}
      </TabStrip>

      <Terminal>
        <MenuBar>
          <svg width="26" height="28" viewBox="0 0 26 28" aria-hidden="true">
            <rect x="1" y="1" width="19" height="17" rx="2" fill="#e8f2ff" stroke="#4a8ae0" strokeWidth="2" />
            <rect x="5" y="9" width="20" height="17" rx="2" fill="#f4f9ff" stroke="#4a8ae0" strokeWidth="2" />
            <path d="M5 12h20" stroke="#4a8ae0" strokeWidth="2" />
            {line("M9 17l4 5 3-6 5 6", "#3a7ad0", 1)}
          </svg>
          <Menus>
            {menus.map((m) => (
              <MenuItem key={m}>
                <u>{m[0]}</u>
                {m.slice(1)}
              </MenuItem>
            ))}
          </Menus>
          <WindowButtons>
            <WindowButton aria-label="Minimize">
              <svg width="18" height="18" viewBox="0 0 18 18"><path d="M2 15h11" stroke="#7f8f8f" strokeWidth="3" /></svg>
            </WindowButton>
            <WindowButton aria-label="Restore">
              <svg width="18" height="18" viewBox="0 0 18 18" fill="none" stroke="#6f7f7f" strokeWidth="2">
                <path d="M6 6V2h10v8h-4M6 3h10" />
                <path d="M2 8h10v8H2zM2 9h10" />
              </svg>
            </WindowButton>
            <WindowButton aria-label="Close">
              <svg width="18" height="18" viewBox="0 0 18 18"><path d="M3 3l12 12M15 3L3 15" stroke="#111" strokeWidth="2" /></svg>
            </WindowButton>
          </WindowButtons>
        </MenuBar>

        <ToolBar>
          <Group $w={840} $first>
            <Grip />
            <DropTool name="newchart" />
            <DropTool name="profiles" />
            <Sep />
            {["market", "target", "folder", "navigator", "tester"].map((n) => <ToolIcon key={n} name={n} />)}
            <Sep />
            <Tool $w={146}>
              <IconBox><Icon>{icons.order}</Icon></IconBox>
              <ToolLabel>New Order</ToolLabel>
            </Tool>
            {["gold", "cloud", "radio"].map((n) => <ToolIcon key={n} name={n} />)}
            <Tool $w={150}>
              <IconBox><Icon>{icons.auto}</Icon></IconBox>
              <ToolLabel>AutoTrading</ToolLabel>
            </Tool>
          </Group>
          <Group $w={603}>
            <Grip />
            <ToolIcon name="bars" />
            <ToolIcon name="candles" on />
            <ToolIcon name="linechart" />
            <Sep />
            <ToolIcon name="zoomin" />
            <ToolIcon name="zoomout" />
            <ToolIcon name="tile" />
            <Sep />
            <ToolIcon name="scroll" on />
            <ToolIcon name="shift" on />
            <Sep />
            <DropTool name="indicator" />
            <DropTool name="clock" />
            <DropTool name="template" />
          </Group>
          <Group $w={421}>
            <Grip />
            {frames.map((f) => (
              <Tool key={f} $on={f === "M5"}><Frame>{f}</Frame></Tool>
            ))}
          </Group>
          <Group $w={440}>
            <Grip />
            <ToolIcon name="pointer" on />
            <ToolIcon name="cross" />
            <Sep />
            {["vline", "hline", "trend", "channel", "dots", "find"].map((n) => <ToolIcon key={n} name={n} />)}
            <Tool aria-label="Messages"><Badge /></Tool>
          </Group>
        </ToolBar>

        <ChartArea>
          <Panel>
            <Plot>
              <PriceDrawing />
              <Overlay>
                <Caption $top={4} $large><CaptionArrow />EURCHF,M5</Caption>
                <ToggleButton>C12-on</ToggleButton>
                <ShowButton>Show</ShowButton>
                <Pips>Pips 0.0</Pips>
              </Overlay>
            </Plot>
            <Axis>
              {prices.map((p) => (
                <Mark key={p} $tick style={{ top: `${priceY(p)}%` }}>{p}</Mark>
              ))}
              <PriceTag style={{ top: `${priceY("0.99540")}%` }}>0.99541</PriceTag>
              <PriceTag $pink style={{ top: `${priceY("0.99090")}%` }}>0.99090</PriceTag>
              <RangeBar />
            </Axis>
          </Panel>
          <Panel>
            <Plot>
              <ZigZagDrawing />
              <Caption $top={6}>ZigZagCallRepaintLegs(own version) 0.000000</Caption>
            </Plot>
            <Axis>
              <Mark style={{ top: "25%" }}>1.5</Mark>
              <Mark style={{ top: "51%" }}>0.00</Mark>
              <Mark style={{ top: "76%" }}>-1.5</Mark>
            </Axis>
          </Panel>
          <Panel>
            <Plot>
              <RsiDrawing />
              <Caption $top={6}>rsi div1: rsi Ma (8.00) 61.3191 61.3191 61.3191 61.3191 61.3266 61.3266 62.2238</Caption>
            </Plot>
            <Axis>
              <Mark style={{ top: "8%" }}>96.6429</Mark>
              {[70, 60, 50, 40, 30].map((v, i) => (
                <Mark key={v} $near style={{ top: `${31 + i * 11}%` }}>{v}</Mark>
              ))}
              <Mark style={{ top: "91%" }}>8.2572</Mark>
            </Axis>
          </Panel>
          <Panel>
            <Plot $h={18} />
            <Axis />
          </Panel>
          <Panel>
            <Plot>
              <BspDrawing />
              <Caption $top={5}>bsp o1 M5 Buy press of EMA Sell press of EMA (35 35) 0.0001 0.0001 0.0001 0.0001</Caption>
            </Plot>
            <Axis>
              <Mark style={{ top: "19%" }}>0.0001</Mark>
              <Mark style={{ top: "79%" }}>0</Mark>
            </Axis>
          </Panel>
          <TimeAxis>
            {times.map((t) => <TimeMark key={t}>{t}</TimeMark>)}
          </TimeAxis>
        </ChartArea>

        <ChartTabs>
          <ChartTab $active>EURCHF,M5</ChartTab>
          <ChartTab>EURCHF,M5</ChartTab>
          <ChartTab>EURCHF,M1</ChartTab>
          <ScrollArrows>
            <ScrollArrow aria-label="Scroll left">
              <svg width="8" height="14" viewBox="0 0 8 14"><path d="M7 0v12L1 6z" fill="#8c9c9c" /></svg>
            </ScrollArrow>
            <ScrollArrow aria-label="Scroll right">
              <svg width="8" height="14" viewBox="0 0 8 14"><path d="M1 0v12l6-6z" fill="#8c9c9c" /></svg>
            </ScrollArrow>
          </ScrollArrows>
        </ChartTabs>

        <StatusBar>
          <StatusCell>For Help, press F1</StatusCell>
          {status.map(([t, w]) => <StatusCell key={t} $w={w}>{t}</StatusCell>)}
          <StatusCell $w={249}>
            <NetworkBars />
            3601/2 kb
            <Corner width="28" height="28" viewBox="0 0 28 28" aria-hidden="true">
              <path d="M2 28L28 2M9 28L28 9M16 28L28 16M23 28l5-5" stroke="#8a8a8a" strokeWidth="2" />
            </Corner>
          </StatusCell>
        </StatusBar>
      </Terminal>
    </Page>
  );
}
